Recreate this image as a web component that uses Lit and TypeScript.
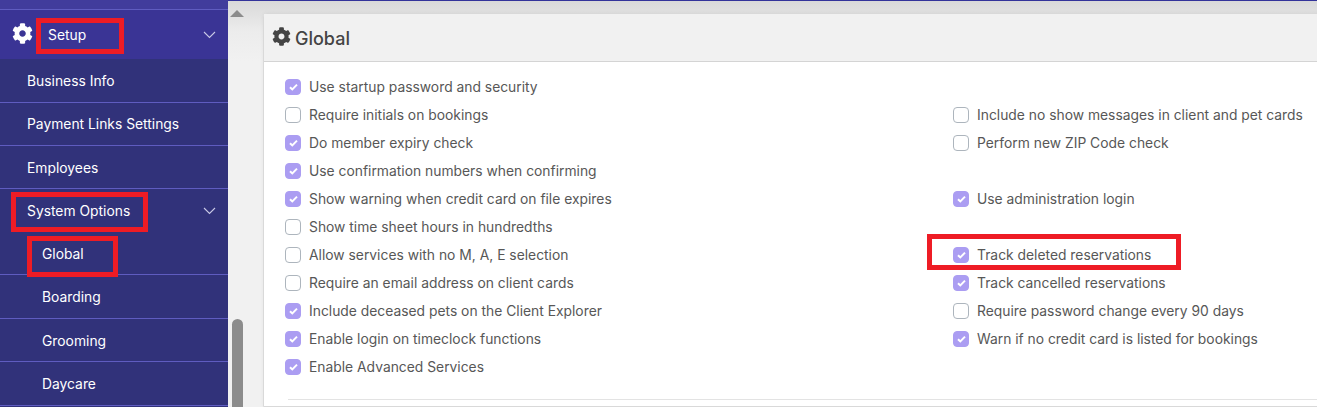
import { LitElement, html, css, svg } from "lit";
import { customElement } from "lit/decorators.js";

const gear = svg`<path fill="currentColor" d="M487.4 315.7l-42.6-24.6c4.3-23.2 4.3-47 0-70.2l42.6-24.6c4.9-2.8 7.1-8.6 5.5-14-11.1-35.6-30-67.8-54.7-94.6-3.8-4.1-10-5.1-14.8-2.3L380.8 110c-17.9-15.4-38.5-27.3-60.8-35.1V25.8c0-5.6-3.9-10.5-9.4-11.7-36.7-8.2-74.3-7.8-109.2 0-5.5 1.2-9.4 6.1-9.4 11.7V75c-22.2 7.9-42.8 19.8-60.8 35.1L88.7 85.5c-4.9-2.8-11-1.9-14.8 2.3-24.7 26.7-43.6 58.9-54.7 94.6-1.7 5.4.6 11.2 5.5 14L67.3 221c-4.3 23.2-4.3 47 0 70.2l-42.6 24.6c-4.9 2.8-7.1 8.6-5.5 14 11.1 35.6 30 67.8 54.7 94.6 3.8 4.1 10 5.1 14.8 2.3l42.6-24.6c17.9 15.4 38.5 27.3 60.8 35.1v49.2c0 5.6 3.9 10.5 9.4 11.7 36.7 8.2 74.3 7.8 109.2 0 5.5-1.2 9.4-6.1 9.4-11.7v-49.2c22.2-7.9 42.8-19.8 60.8-35.1l42.6 24.6c4.9 2.8 11 1.9 14.8-2.3 24.7-26.7 43.6-58.9 54.7-94.6 1.5-5.5-.7-11.3-5.6-14.1zM256 336c-44.1 0-80-35.9-80-80s35.9-80 80-80 80 35.9 80 80-35.9 80-80 80z"/>`;

type Row = [string, boolean] | null;
const rows: [Row, Row][] = [
  [["Use startup password and security", true], null],
  [["Require initials on bookings", false], ["Include no show messages in client and pet cards", false]],
  [["Do member expiry check", true], ["Perform new ZIP Code check", false]],
  [["Use confirmation numbers when confirming", true], null],
  [["Show warning when credit card on file expires", true], ["Use administration login", true]],
  [["Show time sheet hours in hundredths", false], null],
  [["Allow services with no M, A, E selection", false], ["Track deleted reservations", true]],
  [["Require an email address on client cards", false], ["Track cancelled reservations", true]],
  [["Include deceased pets on the Client Explorer", true], ["Require password change every 90 days", false]],
  [["Enable login on timeclock functions", true], ["Warn if no credit card is listed for bookings", true]],
  [["Enable Advanced Services", true], null],
];

@customElement("app-root")
export class AppRoot extends LitElement {
  static styles = css`
    :host { display: block; width: 1317px; height: 407px; overflow: hidden; position: relative;
      font-family: "Inter", "Noto Sans", sans-serif; font-size: 13.85px; }
    * { box-sizing: border-box; }
    .page { display: flex; height: 407px; }
    .side { width: 228px; flex: none; background: #31327a; color: #fff; overflow: hidden; }
    .top { height: 10px; background: #413c9c; border-bottom: 1px solid #5f5cc0; }
    .setup { height: 49px; background: #3a3495; display: flex; align-items: center; padding: 0 12px; gap: 15px; }
    .setup svg.g { width: 21px; height: 21px; color: #fff; margin-top: -2px; }
    .setup span { flex: 1; }
    .chev { width: 13px; height: 8px; color: #c9c9e6; flex: none; }
    .item { height: 43.4px; display: flex; align-items: center; padding: 1px 12px 0 27px; border-top: 1px solid #5f5cc0; }
    .item.first { border-top: 0; height: 42.5px; }
    .item.sub { padding-left: 42px; }
    .item.plain { border-top: 0; height: 42.8px; }
    .item span { flex: 1; }
    .gutter { width: 35px; flex: none; display: flex; flex-direction: column; align-items: center; padding: 9px 17px 0 0; }
    .arrow { width: 0; height: 0; border-left: 7px solid transparent; border-right: 7px solid transparent; border-bottom: 7px solid #8c8c8c; }
    .thumb { width: 11px; margin-top: 302px; height: 100px; border-radius: 6px; background: #8c8c8c; flex: none; }
    .main { flex: 1; min-width: 0; display: flex; background: linear-gradient(#d9d9d9 0, #ececec 30px, #f1f1f1 60px); border-top: 1px solid #33339a; }
    .panel { width: 1100px; flex: none; margin-top: 12px; background: #fff; border: 1px solid #d9d9d9; border-radius: 4px 0 0 0; box-shadow: 0 0 4px rgba(0,0,0,.05); }
    .head { height: 48px; background: #f1f1f1; border-bottom: 1px solid #d4d4d4; display: flex; align-items: center; padding: 0 0 0 8px; gap: 4px; color: #444; font-size: 18px; font-weight: 500; }
    .head span { margin-top: 2px; }
    .head svg { width: 19px; height: 19px; margin-top: -3px; }
    .body { padding: 11px 21px 0; }
    .grid { display: grid; grid-template-columns: 668px 1fr; grid-auto-rows: 28px; }
    .opt { display: flex; align-items: center; gap: 8px; color: #575757; }
    .box { width: 16px; height: 16px; flex: none; border-radius: 4px; border: 1px solid #adb5bd; background: #fff; display: flex; align-items: center; justify-content: center; }
    .box.on { background: #ab9df2; border-color: #ab9df2; }
    .box svg { width: 9px; height: 8px; color: #fff; }
    .rule { height: 1px; background: #e3e3e3; margin: 18px 0 0 3px; }
    .mark { position: absolute; border: 5px solid #ee1c25; pointer-events: none; }
    .m1 { left: 36px; top: 18px; width: 88px; height: 36px; }
    .m2 { left: 11px; top: 192px; width: 137px; height: 40px; }
    .m3 { left: 27px; top: 236px; width: 91px; height: 41px; }
    .m4 { left: 927px; top: 234px; width: 254px; height: 36px; }
  `;

  private chev() {
    return html`<svg class="chev" viewBox="0 0 13 8"><path d="M1 1l5.5 5.5L12 1" fill="none" stroke="currentColor" stroke-width="1.1"/></svg>`;
  }

  private opt(r: Row) {
    if (!r) return html`<div></div>`;
    return html`<label class="opt"><span class="box ${r[1] ? "on" : ""}">${r[1]
      ? html`<svg viewBox="0 0 9 8"><path d="M1 4.2l2.3 2.2L8 1.6" fill="none" stroke="currentColor" stroke-width="2"/></svg>`
      : ""}</span>${r[0]}</label>`;
  }

  render() {
    return html`
      <div class="page">
        <nav class="side">
          <div class="top"></div>
          <div class="setup">
            <svg class="g" viewBox="0 0 512 512">${gear}</svg><span>Setup</span>${this.chev()}
          </div>
          <div class="item first"><span>Business Info</span></div>
          <div class="item"><span>Payment Links Settings</span></div>
          <div class="item"><span>Employees</span></div>
          <div class="item"><span>System Options</span>${this.chev()}</div>
          <div class="item sub plain"><span>Global</span></div>
          <div class="item sub"><span>Boarding</span></div>
          <div class="item sub"><span>Grooming</span></div>
          <div class="item sub"><span>Daycare</span></div>
          <div class="item sub"></div>
        </nav>
        <main class="main">
          <div class="gutter"><div class="arrow"></div><div class="thumb"></div></div>
          <section class="panel">
            <div class="head"><svg viewBox="0 0 512 512">${gear}</svg><span>Global</span></div>
            <div class="body">
              <div class="grid">
                ${rows.map(([a, b]) => html`${this.opt(a)}${this.opt(b)}`)}
              </div>
              <div class="rule"></div>
            </div>
          </section>
        </main>
      </div>
      <div class="mark m1"></div>
      <div class="mark m2"></div>
      <div class="mark m3"></div>
      <div class="mark m4"></div>
    `;
  }
}
